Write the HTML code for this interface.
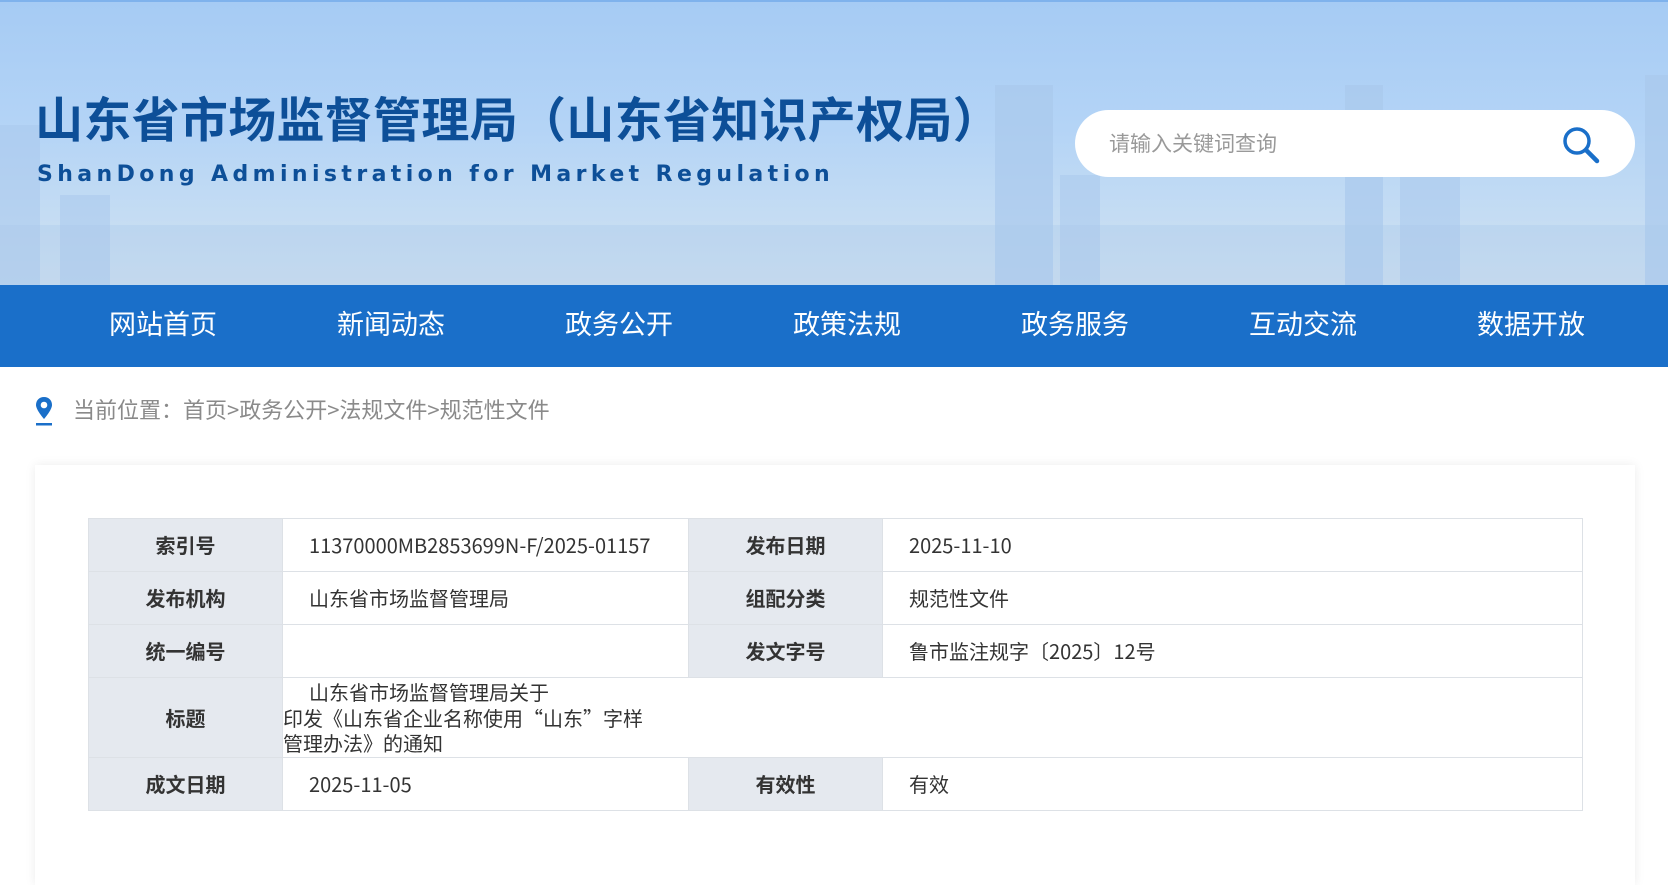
<!DOCTYPE html>
<html><head><meta charset="utf-8"><style>
*{margin:0;padding:0;box-sizing:border-box}
body{width:1668px;height:862px;overflow:hidden;background:#fff;font-family:"Liberation Sans","Noto Sans CJK SC",sans-serif}
.hd{position:absolute;left:0;top:0;width:1668px;height:285px;background:linear-gradient(180deg,#a6cbf4 0%,#b4d4f6 45%,#c4dcf3 75%,#d2e2f0 100%);border-top:2px solid #7fb2ec;overflow:hidden}
.bld{position:absolute;bottom:0;background:#a9c9ec;opacity:.55}
.t1{position:absolute;left:35px;top:79px;font-size:48px;font-weight:bold;color:#0d4f98;white-space:nowrap;letter-spacing:0.3px;font-family:"Noto Sans CJK SC",sans-serif}
.t2{position:absolute;left:37px;top:160px;font-size:22px;font-weight:bold;color:#0d4f98;letter-spacing:4.4px;white-space:nowrap;font-family:"DejaVu Sans",sans-serif}
.sb{position:absolute;left:1075px;top:108px;width:560px;height:67px;background:#fff;border-radius:34px}
.sb span{position:absolute;left:34px;top:18px;font-size:21px;color:#999;font-family:"Noto Sans CJK SC",sans-serif;line-height:30px}
.nav{position:absolute;left:0;top:285px;width:1668px;height:82px;background:#1a6fc9}
.nav span{position:absolute;top:18px;font-size:27px;color:#fff;transform:translateX(-50%);white-space:nowrap;font-family:"Noto Sans CJK SC",sans-serif;line-height:40px}
.bc{position:absolute;left:73px;top:394px;font-size:22px;color:#8a8a8a;font-family:"Noto Sans CJK SC",sans-serif;line-height:30px}
.card{position:absolute;left:35px;top:465px;width:1600px;height:420px;background:#fff;box-shadow:0 0 10px rgba(0,0,0,.08)}
table{position:absolute;left:88px;top:518px;border-collapse:collapse;font-size:20px;color:#333;font-family:"Noto Sans CJK SC",sans-serif}
td{border:1px solid #dde1e6;height:53px;vertical-align:middle;line-height:26px}
td.l{background:#e5e9ef;font-weight:bold;text-align:center;width:194px}
td.v{padding-left:26px}
</style></head><body>
<div class="hd">
<div class="bld" style="left:0;width:40px;height:160px"></div>
<div class="bld" style="left:60px;width:50px;height:90px"></div>
<div class="bld" style="left:995px;width:58px;height:200px;opacity:.7"></div>
<div class="bld" style="left:1060px;width:40px;height:110px"></div>
<div class="bld" style="left:1345px;width:38px;height:200px;opacity:.7"></div>
<div class="bld" style="left:1400px;width:60px;height:120px"></div>
<div class="bld" style="left:1645px;width:23px;height:210px;opacity:.7"></div>
<div class="bld" style="left:0;width:1668px;height:60px;opacity:.35"></div>
<div class="t1">山东省市场监督管理局（山东省知识产权局）</div>
<div class="t2">ShanDong Administration for Market Regulation</div>
<div class="sb"><span>请输入关键词查询</span>
<svg style="position:absolute;left:485px;top:8px" width="50" height="50" viewBox="0 0 50 50"><circle cx="17" cy="23" r="12" fill="none" stroke="#1a6fc9" stroke-width="3.5"/><line x1="26" y1="32" x2="37" y2="43" stroke="#1a6fc9" stroke-width="4.5" stroke-linecap="round"/></svg></div>
</div>
<div class="nav">
<span style="left:163px">网站首页</span><span style="left:391px">新闻动态</span><span style="left:619px">政务公开</span><span style="left:847px">政策法规</span><span style="left:1075px">政务服务</span><span style="left:1303px">互动交流</span><span style="left:1531px">数据开放</span>
</div>
<svg style="position:absolute;left:33px;top:395px" width="22" height="32" viewBox="0 0 22 32"><path d="M11 2C6 2 3 5.5 3 10c0 5 8 14 8 14s8-9 8-14c0-4.5-3-8-8-8z" fill="#1a6fc9"/><circle cx="11" cy="10" r="3.3" fill="#fff"/><rect x="3" y="28" width="16" height="2.5" fill="#1a6fc9"/></svg>
<div class="bc">当前位置：首页&gt;政务公开&gt;法规文件&gt;规范性文件</div>
<div class="card"></div>
<table>
<tr><td class="l">索引号</td><td class="v" style="width:406px">11370000MB2853699N-F/2025-01157</td><td class="l">发布日期</td><td class="v" style="width:700px">2025-11-10</td></tr>
<tr><td class="l">发布机构</td><td class="v">山东省市场监督管理局</td><td class="l">组配分类</td><td class="v">规范性文件</td></tr>
<tr><td class="l">统一编号</td><td class="v"></td><td class="l">发文字号</td><td class="v">鲁市监注规字〔2025〕12号</td></tr>
<tr><td class="l" style="height:80px">标题</td><td colspan="3" style="line-height:25.5px"><div style="white-space:nowrap"><span style="padding-left:26px">山东省市场监督管理局关于</span><br>印发《山东省企业名称使用“山东”字样<br>管理办法》的通知</div></td></tr>
<tr><td class="l">成文日期</td><td class="v">2025-11-05</td><td class="l">有效性</td><td class="v">有效</td></tr>
</table>
</body></html>
